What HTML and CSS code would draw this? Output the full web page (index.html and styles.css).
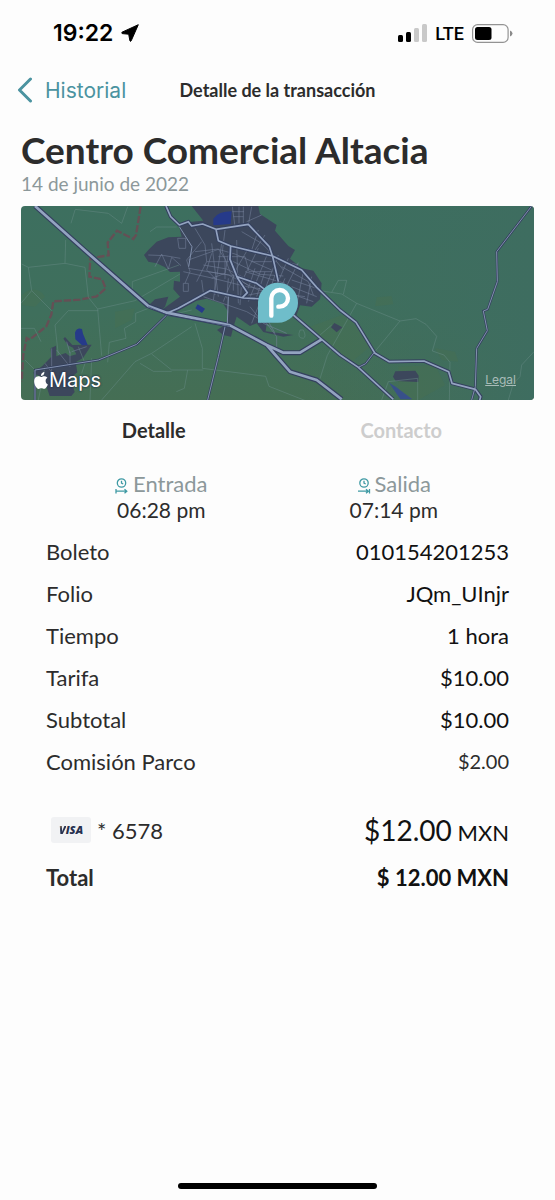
FILE: index.html
```html
<!DOCTYPE html>
<html lang="es">
<head>
<meta charset="utf-8">
<meta name="viewport" content="width=device-width, initial-scale=1">
<title>Detalle de la transacción</title>
<link rel="stylesheet" href="styles.css">
</head>
<body>
<div class="status">
  <div class="status-side">
    <span class="clock">19:22</span>
    <svg class="location" viewBox="0 0 18 18" aria-hidden="true"><path d="M17.300.7 1 8.200Q.3 9 1.200 9.600L7.700 10.200 8.900 16.800Q9.500 17.900 10.200 16.800z" fill="#000" stroke="#000" stroke-width="1" stroke-linejoin="round"/></svg>
  </div>
  <div class="status-side">
    <svg class="signal" viewBox="0 0 29 18" aria-hidden="true">
      <rect x="0" y="11" width="5" height="7" rx="1.500"/><rect x="8" y="8" width="5" height="10" rx="1.500"/>
      <rect x="16" y="4" width="5" height="14" rx="1.500" fill="#c9c9c9"/><rect x="24" y="0" width="5" height="18" rx="1.500" fill="#c9c9c9"/>
    </svg>
    <span class="network">LTE</span>
    <svg class="battery" viewBox="0 0 41 19" aria-hidden="true">
      <rect x=".6" y=".6" width="35.500" height="17.800" rx="5" fill="none" stroke="#939393" stroke-width="1.200"/>
      <rect x="3" y="3" width="16.500" height="13" rx="2.500"/><path d="M38 6.500q2.500.8 2.500 3T38 12.500z" fill="#8a8a8a"/>
    </svg>
  </div>
</div>
<header class="nav">
  <a class="back" href="#"><svg viewBox="0 0 16 26" aria-hidden="true"><path d="M13.500 2 2.500 13l11 11" fill="none" stroke="currentColor" stroke-width="3" stroke-linecap="round" stroke-linejoin="round"/></svg>Historial</a>
  <h2 class="nav-title">Detalle de la transacción</h2>
</header>
<main class="content">
  <h1 class="place">Centro Comercial Altacia</h1>
  <p class="date">14 de junio de 2022</p>
  <div class="map">
    <svg class="map-art" viewBox="18 18 1539 582" role="img" aria-label="Mapa">
      <defs>
        <linearGradient id="land" x1="0" y1="0" x2="0" y2="1"><stop offset="0" stop-color="#3d6f5f"/><stop offset=".55" stop-color="#3f6f5c"/><stop offset="1" stop-color="#456e54"/></linearGradient>
        <linearGradient id="east" x1="0" x2="1" y1="0" y2="0"><stop offset="0" stop-color="#3e6d60" stop-opacity="0"/><stop offset="1" stop-color="#3e6d60"/></linearGradient>
      </defs>
      <path fill="url(#land)" d="M18 18h1539v582H18z"/>
      <path fill="url(#east)" d="M860 18h697v582H860z"/>
      <g fill="#4a704d" opacity=".35"><path d="M20 285q45-35 70 5l-30 30-40-5zM300 335l60-10-10 35-50 25zM1085 292l45-4 5 25-55 6zM885 380l110-40 70 100-60 50zM1150 500l110-5 30 60-80 45h-60zM1260 445l60 10 10 30-50-5z"/></g>
      <g fill="#3c475c">
        <path d="M387 165L400 150 425 125 460 112 500 110 492 78 530 65 565 62 530 18H730L735 42 785 75 780 92 820 138 840 150 825 176 860 205 895 212 920 250 915 298 890 320 855 316 845 345 755 372 752 394 835 405 805 410 745 396 725 370 705 378 665 350 655 382 648 410 625 405 606 390 634 372 640 335 625 312 575 296 545 302 485 335 455 340 440 330 495 290 475 268 477 242 495 245 495 215 465 216 450 202 425 190 400 185z"/>
        <path d="M395 322l25-24 40-8-10 30-15 14zM82 498l27-28-2-25 16-8 1 32 28-10 12 10 20-6-10-20-15-7-14-20 5-5 22 24 58-1-26 40-22 13 5 30-20 17 12 42-10 12h-65l-18-54-32-15zM948 382l10-13 24 13-17 15zM1134 530l7-16 60-2 10 15-1 19-68-3z"/>
      </g>
      <path d="M1122 548l20 12 50 38h-36z" fill="#38508a"/>
      <g fill="#263a8a"><path d="M595 56q15-22 55-22l-3 38-52 4zM548 313l22 13-9 13-20-14z"/><path d="M180 398q5-16 21-11l3 14 14 34-17 1-20-18z"/></g>
      <path d="M377 20l-14 85-8 12-49-25-28 36 3 38-55 9-3 55 38 8 11 27-27 24-50 10-80 5-6 40-15 35-50 40-9-5-10 50-5 80" fill="none" stroke="#654f55" stroke-width="7" stroke-dasharray="22 6"/>
      <g fill="none" stroke="#668a85" stroke-opacity=".6" stroke-width="2.500">
        <path d="M180 28l100 12 40 30 18-50M180 30l-12 40M152 120l-2 70-110 12-20-10M150 190l60 12 10 90 28 35 12 140M40 202l10 70 60 60M18 310l32-38M248 327l112-25 135-80M352 270v-25l140-50M352 270l10 25M405 95l20-14h60M160 332h90M120 375l40-43M18 385h40l20 40M120 375l10 90M400 325l-38 15v25l-34 20 5 30-50 12-5 60M445 350l85-20M530 380l-120 80-50 25-100 115M410 462l60 48h95M375 490l40 24h55M518 510l-10 55-24 10M540 370l22 75v60l190 24 10 30 140 55M30 480l30 30M90 500l-20 100M230 475l-5 125M190 440l20 50-10 30"/>
        <path d="M915 272l65 10 45 28 130 53 48-7 30 17 32 36-13 44 35 12 18 22-2 113M950 277l20-36h25l-10 42M1155 363l-78 95M1025 310l-88 156-22 70M1120 545l88-10v65M1557 455l-37 40-5 35-20 20-15 50M1120 545l-20 55M915 405l35-30M865 390q10 20 0 25-20 0-10-25z"/>
      </g>
      <g fill="none" stroke="#76849d" stroke-opacity=".65" stroke-width="2.500">
        <path d="M400 165l50 2 46 8M420 200l20-38 20 45 10-35 28 25M488 115h24v30h-20zM505 215l90 20 100 25 130 20M560 125l-45 55 10 35-15 35M520 180l90-32 50 14 110 48M540 85l30 50 5 50-30 60M575 185h80l80 38 70 5M590 130l20 160M620 130l-25 170M665 120l5 190M700 145l-35 60-40 100M730 145l-50 100-5 70M760 155l-60 150M790 165l-80 205M820 175l-85 195M850 188l-60 120M520 205l120 20 90 45 140 20M630 90l-8 65 25 65 55 38M680 95l60 35 50 50 60 15M730 90l-20 60M750 105l-30 45M652 20l8 60M672 20v50M685 20v52M652 35h35M655 50h30M710 20l-10 55M740 45l-45 20M505 250h15v24h-15zM560 240l5 38M600 235v50M640 235l-5 60M800 200l80 45 15 40M865 215l-20 100M890 230l-15 80M830 240l75 25M830 260l75 30M825 280l70 25M565 290l130 45 60 35 30 40v35M705 320l40 50 70 30M730 310l50 90M110 445v80M125 450l40 50M165 455v40M90 490l30 40M170 455l45-15M165 460l-10-35"/>
        <path d="M610 170h80l12 45h70M565 195l70 12 80 40M580 215l75 12v45M540 155l70-8 20 30v60M710 185h75l20 25M690 215l120 35M700 285l110-20M640 165l-10 55-40 15M590 160l-15 50 30 30M720 205l-20 60M750 215l-25 75M780 225l-25 75M810 235l-30 70"/>
      </g>
      <g fill="none" stroke="#34405f" stroke-width="11" stroke-linejoin="round">
        <use href="#roads"/><use href="#trunk" stroke-width="15"/>
      </g>
      <g fill="none" stroke="#34405f" stroke-width="7"><path id="lanes" d="M455 345l-90 88-115 47-190 30v90M630 380l-20 90-32 130M1550 18l-105 137 2 90-29 83-13 5 12 59-32 53-4 115-11 40M1077 458l-25 33-22 11"/></g>
      <g fill="none" stroke="#8190ad" stroke-width="3"><use href="#lanes"/><path d="M640 290l-3 80M493 80l38 60-10 60"/></g>
      <defs>
        <path id="roads" d="M453 18l14 32 26 25 27-10 10 13 33-6 40 16 97-15 63 67 10 30 17 75M603 88l7 34 37 16 126 30 87 42 45 52 70 68 48 37 57 93 43 25 104-2 74 32 10 35 70 18 16 22-4 14M455 340l35-15 95-53 100 22 60 3M647 138l-2 40 22 55 30 45-15 15M667 230l58 20 40 30M835 345l85 73 55 47 55 37 105 96"/>
        <path id="trunk" d="M60 18l165 147 175 153 55 20 190 38 110 59 50 23h50l65-40M755 435l70 80 80 25 75 58"/>
      </defs>
      <g fill="none" stroke="#93a3c0" stroke-width="5" stroke-linejoin="round"><use href="#roads"/><use href="#trunk" stroke-width="8"/></g>
      <path d="M400 320l60 27 185 31" fill="none" stroke="#37436a" stroke-width="2"/>
      <path d="M729 368v-62a60 60 0 1 1 60 62z" fill="#6fbdca"/>
      <path d="M769 347V295a25 25 0 0 1 25-25a25 25 0 0 1 0 50H790" fill="none" stroke="#fff" stroke-width="13" stroke-linecap="round"/>
    </svg>
    <span class="maps-logo"><svg viewBox="2 0 20 24" aria-hidden="true"><path d="M12.152 6.896c-.948 0-2.415-1.078-3.960-1.040-2.040.027-3.910 1.183-4.961 3.014-2.117 3.675-.546 9.103 1.519 12.090 1.013 1.454 2.208 3.090 3.792 3.039 1.520-.065 2.090-.987 3.935-.987 1.831 0 2.350.987 3.960.948 1.637-.026 2.676-1.480 3.676-2.948 1.156-1.688 1.636-3.325 1.662-3.415-.039-.013-3.182-1.221-3.220-4.857-.026-3.040 2.480-4.494 2.597-4.559-1.429-2.090-3.623-2.324-4.390-2.376-2-.156-3.675 1.090-4.610 1.090zM15.530 3.830c.843-1.012 1.400-2.427 1.245-3.830-1.207.052-2.662.805-3.532 1.818-.780.896-1.454 2.338-1.273 3.714 1.338.104 2.715-.688 3.559-1.701" fill="#fff"/></svg>Maps</span>
    <a class="legal" href="#">Legal</a>
  </div>
  <div class="tabs" role="tablist">
    <button class="tab tab-active" type="button" role="tab" aria-selected="true">Detalle</button>
    <button class="tab" type="button" role="tab" aria-selected="false">Contacto</button>
  </div>
  <section class="times">
    <div class="time">
      <span class="time-label"><svg viewBox="0 0 14 16" aria-hidden="true"><circle cx="6.500" cy="5" r="4.200"/><path d="M6.500 2.800V5.200l1.700.8M1 11v4.500M1.500 13.200h10M9.500 11.200l2.300 2-2.300 2"/></svg>Entrada</span>
      <span class="time-value">06:28 pm</span>
    </div>
    <div class="time">
      <span class="time-label"><svg viewBox="0 0 14 16" aria-hidden="true"><circle cx="7" cy="5" r="4.200"/><path d="M7 2.800V5.200l1.700.8M12.500 11v4.500M1 13.200h10.500M9 11.200l2.300 2-2.300 2"/></svg>Salida</span>
      <span class="time-value">07:14 pm</span>
    </div>
  </section>
  <dl class="rows">
    <div class="row"><dt>Boleto</dt><dd>010154201253</dd></div>
    <div class="row"><dt>Folio</dt><dd>JQm_UInjr</dd></div>
    <div class="row"><dt>Tiempo</dt><dd>1 hora</dd></div>
    <div class="row"><dt>Tarifa</dt><dd>$10.00</dd></div>
    <div class="row"><dt>Subtotal</dt><dd>$10.00</dd></div>
    <div class="row"><dt>Comisión Parco</dt><dd class="fee">$2.00</dd></div>
  </dl>
  <dl class="summary">
    <div class="row payment"><dt><span class="visa"><span class="visa-v">V</span>ISA</span>* 6578</dt><dd><span class="amount">$12.00</span> MXN</dd></div>
    <div class="row total"><dt>Total</dt><dd>$ 12.00 MXN</dd></div>
  </dl>
</main>
<div class="home-bar"></div>
</body>
</html>
```
FILE: styles.css
```css
* { box-sizing: border-box; }
body {
  margin: 0;
  min-height: 100vh;
  display: flex;
  flex-direction: column;
  background: #fdfdfd;
  color: #2c2c2c;
  font-family: Lato, "Open Sans", sans-serif;
  font-size: 22px;
}
h1, h2, p, dl, dd { margin: 0; }
svg { display: block; flex: none; }
.status {
  display: flex;
  justify-content: space-between;
  align-items: center;
  height: 66px;
  padding: 0 42px 0 53px;
  color: #000;
  font-family: Inter, sans-serif;
}
.status-side { display: flex; align-items: center; gap: 8px; }
.clock { font-size: 23px; font-weight: 600; }
.location { width: 18px; height: 18px; }
.signal { width: 29px; height: 18px; }
.network { font-family: Roboto, sans-serif; font-size: 18px; font-weight: 500; }
.battery { width: 41px; height: 19px; }
.nav {
  display: grid;
  grid-template-columns: 1fr auto 1fr;
  align-items: center;
  height: 48px;
  padding: 0 17px;
}
.back {
  display: flex;
  align-items: center;
  gap: 12px;
  color: #4b93a0;
  font-family: Inter, sans-serif;
  font-size: 21px;
  text-decoration: none;
}
.back svg { width: 16px; height: 26px; }
.nav-title { font-size: 18px; font-weight: 700; }
.content { padding: 14px 21px 0; }
.place { font-size: 37px; line-height: 44px; font-weight: 700; }
.date { font-size: 19px; line-height: 24px; color: #8c989a; }
.map {
  position: relative;
  margin-top: 10px;
  overflow: hidden;
  border-radius: 4px;
}
.map-art { width: 100%; height: auto; }
.maps-logo, .legal { position: absolute; color: #fff; font-family: Inter, sans-serif; }
.maps-logo {
  left: 13px;
  bottom: 8px;
  display: flex;
  align-items: center;
  gap: 1px;
  font-size: 20px;
  line-height: 24px;
  text-shadow: 0 0 2px #26344a, 0 0 2px #26344a;
}
.maps-logo svg { width: 14px; height: 17px; }
.legal { right: 18px; bottom: 12px; font-size: 12px; line-height: 16px; color: #a9bcb8; }
.tabs { display: grid; grid-template-columns: 1fr 1fr; padding: 15px 9px 0; }
.tab {
  border: 0;
  padding: 0;
  background: none;
  color: #cdcdcd;
  font-family: inherit;
  font-size: 20px;
  line-height: 30px;
  font-weight: 700;
}
.tab-active { color: #2c2c2c; }
.times { display: grid; grid-template-columns: 1fr 1fr; padding: 26px 24px 0; }
.time { display: flex; flex-direction: column; align-items: center; line-height: 26px; }
.time-label { display: flex; align-items: center; gap: 4px; color: #8c989a; }
.time-value { font-size: 21px; }
.time-label svg { width: 14px; height: 16px; margin-top: 4px; fill: none; stroke: #3f9aa4; stroke-width: 1.3; }
.rows, .summary { padding: 0 25px; }
.rows { padding-top: 7px; }
.row { display: flex; justify-content: space-between; align-items: center; height: 42px; }
.row dd { color: #111; }
.row .fee { font-size: 20px; color: #2c2c2c; }
.summary { padding-top: 24px; }
.payment { height: 48px; }
.payment dt { display: flex; align-items: center; gap: 6px; }
.amount { font-size: 28px; }
.visa {
  width: 40px;
  margin-left: 5px;
  border-radius: 3px;
  background: #f1f2f4;
  color: #25304f;
  font-family: "Open Sans", sans-serif;
  font-size: 11px;
  line-height: 26px;
  font-style: italic;
  font-weight: 800;
  text-align: center;
}
.visa-v { background: linear-gradient(120deg, #e8a651 10%, #25304f 40%); background-clip: text; color: transparent; }
.total { height: 46px; font-weight: 700; }
.home-bar { width: 36%; height: 6px; margin: auto auto 11px; border-radius: 3px; background: #000; }
```
